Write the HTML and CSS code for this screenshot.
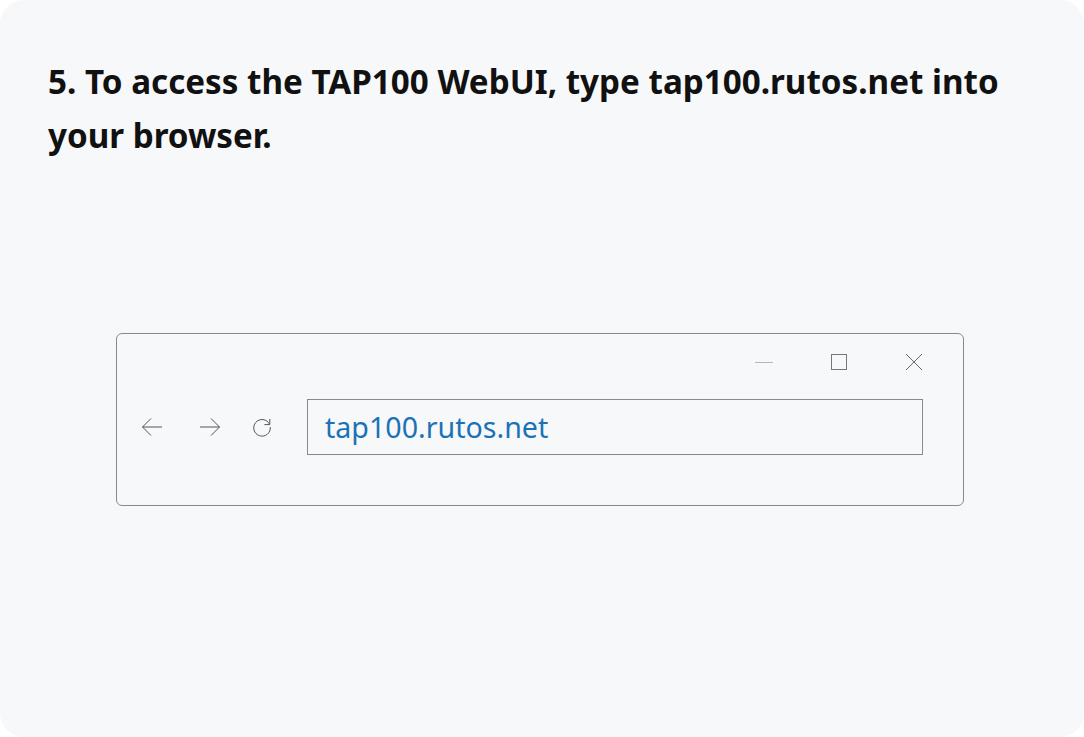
FILE: index.html
```html
<!DOCTYPE html>
<html lang="en">
<head>
<meta charset="utf-8">
<title>TAP100 WebUI</title>
<link rel="stylesheet" href="styles.css">
</head>
<body>
<main class="card">
  <h1 class="title">5. To access the TAP100 WebUI, type tap100.rutos.net into your browser.</h1>
  <div class="window">
    <div class="titlebar">
      <svg class="ctl" width="18" height="18" viewBox="0 0 18 18"><path d="M0 9.5H18" stroke="#b5b5b5" stroke-width="1" fill="none"/></svg>
      <svg class="ctl" width="18" height="18" viewBox="0 0 18 18"><rect x="1.5" y="1.5" width="15" height="15" stroke="#777" stroke-width="1" fill="none"/></svg>
      <svg class="ctl" width="18" height="18" viewBox="0 0 18 18"><path d="M1 1L17 17M17 1L1 17" stroke="#666" stroke-width="1" fill="none"/></svg>
    </div>
    <div class="navrow">
      <svg class="nav" width="22" height="22" viewBox="0 0 22 22"><path d="M21 11H1.5M10 2.5L1.5 11L10 19.5" stroke="#555" stroke-width="1" fill="none"/></svg>
      <svg class="nav" width="22" height="22" viewBox="0 0 22 22"><path d="M1 11H20.5M12 2.5L20.5 11L12 19.5" stroke="#555" stroke-width="1" fill="none"/></svg>
      <svg class="nav" width="22" height="22" viewBox="0 0 22 22"><path d="M18.5 8.2A8.3 8.3 0 1 0 19.3 11" stroke="#555" stroke-width="1" fill="none"/><path d="M18.8 3V8.6H13.4" stroke="#555" stroke-width="1" fill="none"/></svg>
      <div class="address">tap100.rutos.net</div>
    </div>
  </div>
</main>
</body>
</html>
```
FILE: styles.css
```css
html, body {
  margin: 0;
  padding: 0;
  background: #ffffff;
}
body {
  width: 1084px;
  height: 737px;
  font-family: "Noto Sans", "Open Sans", sans-serif;
}
.card {
  box-sizing: border-box;
  width: 1084px;
  height: 737px;
  background: #f7f8fa;
  border-radius: 24px;
  padding: 55px 48px 48px 48px;
  display: flex;
  flex-direction: column;
}
.title {
  margin: 0;
  font-size: 33.2px;
  line-height: 54px;
  font-weight: 700;
  color: #111111;
  max-width: 988px;
}
.window {
  box-sizing: border-box;
  margin: 170px 0 0 68px;
  width: 848px;
  height: 173px;
  border: 1px solid #8a8a8a;
  border-radius: 6px;
  display: flex;
  flex-direction: column;
}
.titlebar {
  display: flex;
  justify-content: flex-end;
  align-items: center;
  gap: 57px;
  height: 56px;
  padding: 0 40px 0 0;
}
.ctl {
  display: block;
}
.navrow {
  display: flex;
  align-items: center;
  padding: 9px 40px 0 24px;
}
.nav {
  display: block;
  margin-right: 36px;
}
.nav:nth-child(2) {
  margin-right: 30px;
}
.nav:nth-child(3) {
  margin-right: 34px;
}
.address {
  box-sizing: border-box;
  flex: 1;
  height: 56px;
  border: 1px solid #8a8a8a;
  padding: 0 0 2px 17px;
  display: flex;
  align-items: center;
  font-size: 28.6px;
  color: #1b72b5;
}
```
